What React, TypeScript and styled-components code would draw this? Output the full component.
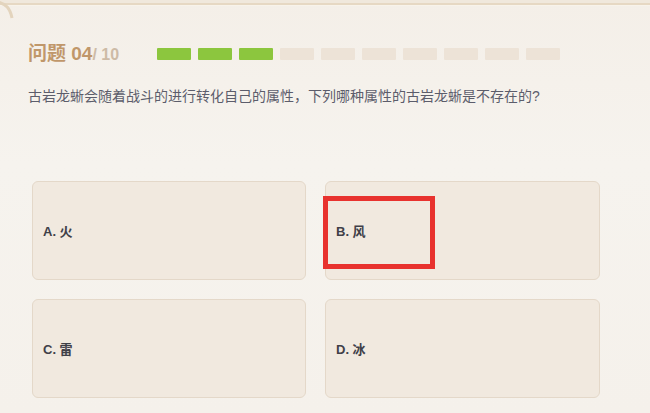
import React from 'react';
import styled, { createGlobalStyle } from 'styled-components';

const GlobalStyle = createGlobalStyle`
  html, body {
    margin: 0;
    padding: 0;
    background: #f6f2ec;
  }
  body {
    font-family: "Liberation Sans", "Noto Sans CJK SC", sans-serif;
  }
`;

const Page = styled.div`
  width: 650px;
  height: 413px;
  overflow: hidden;
  background: linear-gradient(180deg, #f4efe8 0%, #f6f3ee 40%, #f5f1eb 100%);
  position: relative;
`;

const Frame = styled.div`
  height: 3px;
  background: #f0e8dc;
  border-bottom: 2px solid #e6d8c3;
  box-shadow: 0 1px 0 #f8f3ea;
  position: relative;
`;

const Corner = styled.svg`
  position: absolute;
  left: -4px;
  top: -2px;
`;

const Content = styled.main`
  padding: 38px 0 0 28px;
`;

const TitleRow = styled.div`
  display: flex;
  align-items: center;
  height: 22px;
`;

const Title = styled.h1`
  margin: 0;
  width: 129px;
  font-size: 19px;
  font-weight: 700;
  color: #c0976a;
  line-height: 22px;
  white-space: nowrap;
`;

const Total = styled.span`
  font-size: 16px;
  color: #cdbba6;
`;

const Bars = styled.div`
  display: flex;
  gap: 7px;
`;

const Bar = styled.span<{ $done: boolean }>`
  width: 34px;
  height: 12px;
  border-radius: 1px;
  background: ${(p) => (p.$done ? '#8cc63e' : '#ede3d7')};
`;

const Question = styled.p`
  margin: 21px 0 0;
  font-size: 14px;
  line-height: 20px;
  color: #5c5d6b;
`;

const Options = styled.div`
  display: grid;
  grid-template-columns: 274px 275px;
  grid-auto-rows: 99px;
  column-gap: 19px;
  row-gap: 19px;
  margin: 75px 0 0 4px;
`;

const Option = styled.div`
  position: relative;
  display: flex;
  align-items: center;
  padding-left: 10px;
  background: #f1e9df;
  border: 1px solid #e4d8c9;
  border-radius: 6px;
  font-size: 13px;
  font-weight: 700;
  color: #404048;
`;

const Highlight = styled.div`
  position: absolute;
  left: -3px;
  top: 14px;
  width: 112px;
  height: 73px;
  box-sizing: border-box;
  border: 5px solid #e8322e;
`;

const options = ['A. 火', 'B. 风', 'C. 雷', 'D. 冰'];

const App = () => {
  return (
    <>
      <GlobalStyle />
      <Page>
        <Frame>
          <Corner width="24" height="24" viewBox="0 0 24 24">
            <path
              d="M2 4 C 10 6, 14 10, 16 20"
              fill="none"
              stroke="#e3d4bd"
              strokeWidth="3"
            />
          </Corner>
        </Frame>
        <Content>
          <TitleRow>
            <Title>
              问题 04<Total>/ 10</Total>
            </Title>
            <Bars>
              {Array.from({ length: 10 }).map((_, i) => (
                <Bar key={i} $done={i < 3} />
              ))}
            </Bars>
          </TitleRow>
          <Question>
            古岩龙蜥会随着战斗的进行转化自己的属性，下列哪种属性的古岩龙蜥是不存在的?
          </Question>
          <Options>
            {options.map((o, i) => (
              <Option key={o}>
                {o}
                {i === 1 && <Highlight />}
              </Option>
            ))}
          </Options>
        </Content>
      </Page>
    </>
  );
};

export default App;
